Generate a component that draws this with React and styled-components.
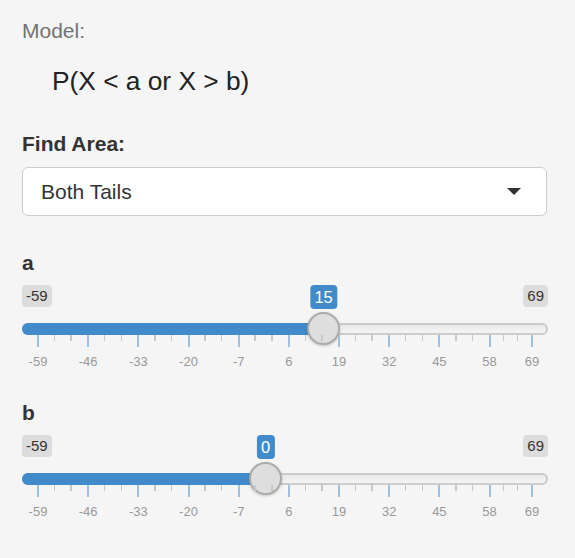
import React from "react";
import styled, { createGlobalStyle } from "styled-components";

const Global = createGlobalStyle`
  html, body { margin: 0; padding: 0; background: #f5f5f5; }
  body { font-family: "Liberation Sans", Arial, Helvetica, sans-serif; color: #333; }
`;

const Page = styled.div`
  padding: 17px 0 0 22px;
  width: 526px;
`;

const ModelLabel = styled.div`
  font-size: 21px;
  line-height: 28px;
  color: #737373;
`;

const Formula = styled.div`
  margin-top: 18px;
  padding-left: 30px;
  font-size: 26.3px;
  line-height: 36px;
  color: #222;
`;

const FieldLabel = styled.div`
  margin-top: ${(p) => p.$mt}px;
  font-size: 21px;
  line-height: 28px;
  font-weight: 700;
  color: #333;
`;

const SelectBox = styled.div`
  margin-top: 9px;
  width: 525px;
  height: 49px;
  box-sizing: border-box;
  border: 1px solid #cccccc;
  border-radius: 6px;
  background: #fff;
  display: flex;
  align-items: center;
  justify-content: space-between;
  padding: 0 25px 0 18px;
  font-size: 21px;
  color: #333;
`;

const Caret = styled.span`
  width: 0;
  height: 0;
  border-left: 7px solid transparent;
  border-right: 7px solid transparent;
  border-top: 7px solid #333;
`;

const Slider = styled.div`
  margin-top: 8px;
`;

const EdgeRow = styled.div`
  display: flex;
  justify-content: space-between;
`;

const EdgeTag = styled.span`
  height: 22px;
  line-height: 22px;
  padding: 0 4px;
  font-size: 15px;
  color: #333;
  background: rgba(0, 0, 0, 0.1);
  border-radius: 4px;
`;

const Track = styled.div`
  position: relative;
  margin-top: 16px;
  height: 12px;
  border-radius: 6px;
  background: linear-gradient(to bottom, #dedede -50%, #ffffff 150%);
  box-shadow: inset 0 0 0 2px #cccccc;
`;

const Fill = styled.div`
  position: absolute;
  left: 0;
  top: 0;
  height: 12px;
  background: #428bca;
  border-radius: 6px 0 0 6px;
`;

const Thumb = styled.div`
  position: absolute;
  top: -11px;
  width: 33px;
  height: 33px;
  margin-left: -16.5px;
  box-sizing: border-box;
  border-radius: 50%;
  background: #dedede;
  border: 2px solid #ababab;
  box-shadow: 0 1px 3px rgba(0, 0, 0, 0.2);
`;

const ValueTag = styled.span`
  position: absolute;
  top: -38px;
  height: 24px;
  line-height: 24px;
  padding: 0 4.5px;
  transform: translateX(-50%);
  font-size: 16.5px;
  color: #fff;
  background: #428bca;
  border-radius: 4px;
  white-space: nowrap;
`;

const Grid = styled.div`
  position: relative;
  height: 34px;
`;

const Tick = styled.div`
  position: absolute;
  top: 0;
  width: ${(p) => (p.$major ? 2 : 1.5)}px;
  margin-left: -1px;
  height: ${(p) => (p.$major ? 12 : 6)}px;
  background: ${(p) => (p.$major ? "#9dc0df" : "#c8c8c8")};
`;

const GridText = styled.span`
  position: absolute;
  top: 19px;
  transform: translateX(-50%);
  font-size: 13px;
  line-height: 15px;
  color: #999;
  white-space: nowrap;
`;

const MIN = -59;
const MAX = 69;
const MAJORS = [-59, -46, -33, -20, -7, 6, 19, 32, 45, 58, 69];

const pos = (v) => `calc(16px + ${(v - MIN) / (MAX - MIN)} * (100% - 32px))`;

const ticks = [];
MAJORS.forEach((v, i) => {
  ticks.push({ v, major: true });
  if (i < MAJORS.length - 1) {
    const n = MAJORS[i + 1];
    ticks.push({ v: v + (n - v) / 3, major: false });
    ticks.push({ v: v + (2 * (n - v)) / 3, major: false });
  }
});

function RangeSlider({ value }) {
  return (
    <Slider>
      <EdgeRow>
        <EdgeTag>{MIN}</EdgeTag>
        <EdgeTag>{MAX}</EdgeTag>
      </EdgeRow>
      <Track>
        <Fill style={{ width: pos(value) }} />
        <ValueTag style={{ left: pos(value) }}>{value}</ValueTag>
        <Thumb style={{ left: pos(value) }} />
      </Track>
      <Grid>
        {ticks.map((t, i) => (
          <Tick key={i} $major={t.major} style={{ left: pos(t.v) }} />
        ))}
        {MAJORS.map((v) => (
          <GridText key={v} style={{ left: pos(v) }}>
            {v}
          </GridText>
        ))}
      </Grid>
    </Slider>
  );
}

export default function App() {
  return (
    <>
      <Global />
      <Page>
        <ModelLabel>Model:</ModelLabel>
        <Formula>P(X &lt; a or X &gt; b)</Formula>
        <FieldLabel $mt={31}>Find Area:</FieldLabel>
        <SelectBox>
          <span>Both Tails</span>
          <Caret />
        </SelectBox>
        <FieldLabel $mt={33}>a</FieldLabel>
        <RangeSlider value={15} />
        <FieldLabel $mt={30}>b</FieldLabel>
        <RangeSlider value={0} />
      </Page>
    </>
  );
}
